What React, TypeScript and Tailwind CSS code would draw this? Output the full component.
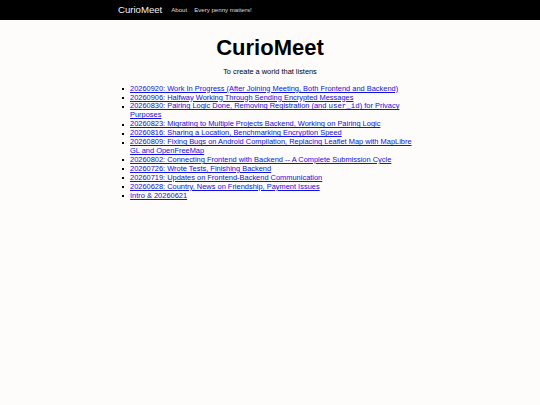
const posts = [
  '20260920: Work In Progress (After Joining Meeting, Both Frontend and Backend)',
  '20260906: Halfway Working Through Sending Encrypted Messages',
  'PAIRING',
  '20260823: Migrating to Multiple Projects Backend, Working on Pairing Logic',
  '20260816: Sharing a Location, Benchmarking Encryption Speed',
  '20260809: Fixing Bugs on Android Compilation, Replacing Leaflet Map with MapLibre GL and OpenFreeMap',
  '20260802: Connecting Frontend with Backend -- A Complete Submission Cycle',
  '20260726: Wrote Tests, Finishing Backend',
  '20260719: Updates on Frontend-Backend Communication',
  '20260628: Country, News on Friendship, Payment Issues',
  'Intro & 20260621',
];

export default function App() {
  return (
    <div
      className="min-h-[405px] bg-[#fdfcfa] text-black"
      style={{ fontFamily: '"Liberation Sans", Arial, sans-serif' }}
    >
      {/* Navbar */}
      <nav className="h-[20px] bg-black">
        <div className="mx-auto flex h-full w-[304px] items-center">
          <span className="text-[9.6px] text-[#f2f2f2]">CurioMeet</span>
          <span className="ml-[9px] text-[6.1px] text-[#dddddd]">About</span>
          <span className="ml-[7px] text-[6.1px] text-[#dddddd]">Every penny matters!</span>
        </div>
      </nav>

      <main className="mx-auto w-[304px]">
        <h1 className="mt-[15px] text-center text-[22px] font-bold leading-[25px]">CurioMeet</h1>
        <p className="mt-[8px] text-center text-[7.4px] leading-[8.6px]">To create a world that listens</p>

        <ul className="mt-[8px] text-[7.45px] leading-[8.92px]">
          {posts.map((p) => (
            <li key={p} className="flex">
              <span className="flex h-[8.92px] w-[12px] shrink-0 items-center pl-[4px]">
                <span className="h-[2px] w-[2px] bg-black" />
              </span>
              <a href="#" className="text-[#1010e0] underline">
                {p === 'PAIRING' ? (
                  <>
                    20260830: Pairing Logic Done, Removing Registration (and{' '}
                    <code className="leading-[8px]" style={{ fontFamily: '"Liberation Mono", monospace' }}>user_id</code>) for Privacy Purposes
                  </>
                ) : (
                  p
                )}
              </a>
            </li>
          ))}
        </ul>
      </main>
    </div>
  );
}
